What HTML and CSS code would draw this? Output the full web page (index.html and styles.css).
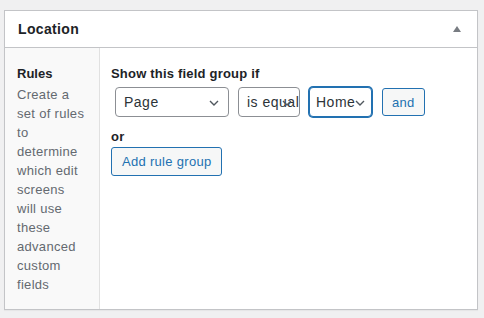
FILE: index.html
```html
<!DOCTYPE html>
<html lang="en">

<head>
  <meta charset="UTF-8" />
  <title>Location</title>
  <link rel="stylesheet" href="styles.css">
</head>

<body>
  <div class="postbox">
    <div class="postbox-header">
      <h2 class="postbox-title">Location</h2>
      <span class="toggle-arrow"></span>
    </div>

    <div class="field-row">
      <div class="field-label">
        <label>Rules</label>
        <p class="description">Create a set of rules to determine which edit screens will use these advanced custom fields</p>
      </div>

      <div class="field-input">
        <h4 class="group-title">Show this field group if</h4>
        <div class="rule-row">
          <div class="select select-param">
            <span class="select-text">Page</span>
            <svg class="chevron" width="10" height="6" viewBox="0 0 10 6"><path d="M1 1l4 4 4-4" fill="none" stroke="#50575e" stroke-width="1.4"/></svg>
          </div>
          <div class="select select-operator">
            <span class="select-text">is equal to</span>
            <svg class="chevron" width="10" height="6" viewBox="0 0 10 6"><path d="M1 1l4 4 4-4" fill="none" stroke="#50575e" stroke-width="1.4"/></svg>
          </div>
          <div class="select select-value is-focused">
            <span class="select-text">Home</span>
            <svg class="chevron" width="10" height="6" viewBox="0 0 10 6"><path d="M1 1l4 4 4-4" fill="none" stroke="#50575e" stroke-width="1.4"/></svg>
          </div>
          <button class="button">and</button>
        </div>
        <h4 class="group-title or-title">or</h4>
        <button class="button">Add rule group</button>
      </div>
    </div>
  </div>
</body>

</html>
```

FILE: styles.css
```css
body {
  margin: 0;
  padding: 10px 6px 10px 4px;
  background: #f0f0f1;
  font-family: "Liberation Sans", Arial, sans-serif;
  font-size: 13px;
  line-height: 19px;
  color: #1d2327;
}

.postbox {
  background: white;
  border: 1px solid #c3c4c7;
  box-shadow: 0 1px 1px rgba(0, 0, 0, 0.04);
}

.postbox-header {
  display: flex;
  justify-content: space-between;
  align-items: center;
  height: 36px;
  padding: 0 16px 0 13px;
  border-bottom: 1px solid #c3c4c7;
}

.postbox-title {
  margin: 0;
  font-size: 14px;
  font-weight: 600;
  letter-spacing: 0.35px;
}

.toggle-arrow {
  width: 0;
  height: 0;
  border-left: 4px solid transparent;
  border-right: 4px solid transparent;
  border-bottom: 6px solid #787c82;
}

.field-row {
  display: flex;
}

.field-label {
  width: 70px;
  flex-shrink: 0;
  padding: 16px 12px 15px;
  background: #f9f9f9;
  border-right: 1px solid #e1e1e1;
}

.field-label label {
  display: block;
  font-weight: bold;
  margin-bottom: 2px;
}

.description {
  margin: 0;
  color: #646970;
  letter-spacing: 0.3px;
}

.field-input {
  flex: 1;
  padding: 16px 11px 15px;
}

.group-title {
  margin: 0;
  font-size: 13px;
  font-weight: bold;
  letter-spacing: 0.2px;
}

.rule-row {
  display: flex;
  align-items: center;
  gap: 9px;
  margin: 4px 0 0 4px;
}

.select {
  position: relative;
  display: flex;
  align-items: center;
  box-sizing: border-box;
  height: 30px;
  padding: 0 8px;
  border: 1px solid #8c8f94;
  border-radius: 4px;
  background: white;
  overflow: hidden;
  font-size: 14px;
  color: #2c3338;
  white-space: nowrap;
  letter-spacing: 0.5px;
}

.select-text {
  overflow: hidden;
}

.chevron {
  position: absolute;
  right: 9px;
  top: 12px;
}

.select-param {
  width: 114px;
}

.select-operator {
  width: 62px;
  padding-right: 0;
}

.select-operator .chevron {
  right: 7px;
}

.select-value {
  width: 63px;
  padding-right: 0;
  padding-left: 6px;
}

.select-value .chevron {
  right: 6px;
}

.is-focused {
  border-color: #2271b1;
  box-shadow: 0 0 0 1px #2271b1;
}

.button {
  box-sizing: border-box;
  height: 29px;
  padding: 0 10px;
  border: 1px solid #2271b1;
  border-radius: 3px;
  background: #f6f7f7;
  color: #2271b1;
  font-family: inherit;
  font-size: 13px;
  letter-spacing: 0.3px;
  cursor: pointer;
}

.rule-row .button {
  height: 28px;
  padding: 0 9px;
  margin-left: 1px;
}

.or-title {
  margin: 10px 0 1px;
}
```
